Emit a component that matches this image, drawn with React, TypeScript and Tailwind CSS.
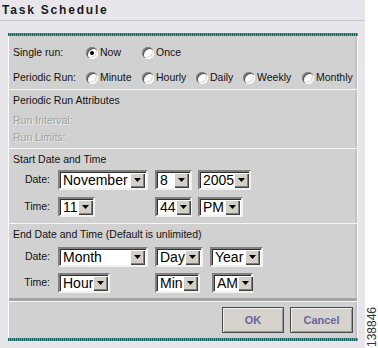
import type { ReactNode } from 'react';

const teal =
  'h-[3px] bg-[repeating-linear-gradient(90deg,#14615c_0px,#14615c_1px,#5ea7a1_1px,#5ea7a1_2px)]';

function Radio({ checked }: { checked?: boolean }) {
  return (
    <span className="inline-flex h-[12px] w-[12px] shrink-0 items-center justify-center rounded-full bg-white shadow-[inset_1px_1px_0_#8a8a8a,inset_2px_2px_0_#5a5a5a,inset_-1px_-1px_0_#ffffff,inset_-2px_-2px_0_#dcdcdc]">
      {checked && <span className="h-[4px] w-[4px] rounded-full bg-black" />}
    </span>
  );
}

function Option({ label, checked, className }: { label: string; checked?: boolean; className?: string }) {
  return (
    <div className={`flex items-center gap-[1px] ${className ?? ''}`}>
      <Radio checked={checked} />
      <span className="pl-[1px]">{label}</span>
    </div>
  );
}

function DropButton() {
  return (
    <span className="mr-[1px] flex h-[15px] w-[15px] shrink-0 items-center justify-center bg-[#d4d0c8] shadow-[inset_1px_1px_0_#ffffff,inset_-1px_-1px_0_#404040,inset_-2px_-2px_0_#808080]">
      <svg width="7" height="4" viewBox="0 0 7 4">
        <polygon points="0,0 7,0 3.5,4" fill="#000" />
      </svg>
    </span>
  );
}

function Select({ value, className }: { value: string; className: string }) {
  return (
    <div
      className={`flex h-[20px] shrink-0 items-center border-2 border-t-[#808080] border-l-[#808080] border-b-[#f2f2f2] border-r-[#f2f2f2] bg-white shadow-[inset_1px_1px_0_#303030] ${className}`}
    >
      <span className="flex-1 pl-[3px] text-[14px] leading-none text-black">{value}</span>
      <DropButton />
    </div>
  );
}

function FieldRow({ label, children, className }: { label: string; children: ReactNode; className?: string }) {
  return (
    <div className={`flex items-center ${className ?? ''}`}>
      <span className="w-[41px] text-right">{label}</span>
      <div className="ml-[8px] flex items-center">{children}</div>
    </div>
  );
}

function Sep() {
  return <div className="h-[1px] bg-[#f7f7f7]" />;
}

export default function App() {
  return (
    <div className="flex h-[348px] w-[378px] bg-white font-['Liberation_Sans',Arial,sans-serif] text-[10.5px] text-[#111]">
      <div className="flex w-[365px] flex-col bg-[#e8e6ea]">
        <div className="h-[21px] border-b border-[#c9c6cc] pl-[2px] pt-[3px] text-[12px] font-bold leading-[14px] tracking-[1.8px] text-[#1a1a1a]">
          Task Schedule
        </div>

        <div className="ml-[8px] mt-[12px] w-[350px]">
          <div className={teal} />
          <div className="border-l border-r border-l-white border-r-[#f4f4f4] bg-[#d1d1d1] shadow-[inset_-2px_0_0_#c4c4c4]">
            {/* run type */}
            <div className="pl-[4px] pt-[6px]">
              <div className="flex h-[22px] items-center">
                <span className="w-[73px]">Single run:</span>
                <Option label="Now" checked className="w-[56px]" />
                <Option label="Once" />
              </div>
              <div className="mt-[3px] flex h-[22px] items-center">
                <span className="w-[73px]">Periodic Run:</span>
                <Option label="Minute" className="w-[56px]" />
                <Option label="Hourly" className="w-[54px]" />
                <Option label="Daily" className="w-[47px]" />
                <Option label="Weekly" className="w-[59px]" />
                <Option label="Monthly" />
              </div>
            </div>
            <Sep />

            {/* periodic attributes */}
            <div className="pl-[4px] pt-[3px] pb-[2px]">
              <div className="flex h-[16px] items-center">Periodic Run Attributes</div>
              <div className="mt-[4px] flex h-[16px] items-center text-[#a2a2a2] [text-shadow:1px_1px_0_#ececec]">
                Run Interval:
              </div>
              <div className="mt-[1px] flex h-[16px] items-center text-[#a2a2a2] [text-shadow:1px_1px_0_#ececec]">
                Run Limits:
              </div>
            </div>
            <Sep />

            {/* start */}
            <div className="pt-[3px] pb-[6px]">
              <div className="flex h-[16px] items-center pl-[4px]">Start Date and Time</div>
              <FieldRow label="Date:" className="mt-[2px]">
                <Select value="November" className="w-[90px]" />
                <Select value="8" className="ml-[7px] w-[37px]" />
                <Select value="2005" className="ml-[6px] w-[53px]" />
              </FieldRow>
              <FieldRow label="Time:" className="mt-[7px]">
                <div className="w-[97px]">
                  <Select value="11" className="w-[37px]" />
                </div>
                <Select value="44" className="w-[37px]" />
                <Select value="PM" className="ml-[6px] w-[45px]" />
              </FieldRow>
            </div>
            <Sep />

            {/* end */}
            <div className="pt-[3px] pb-[5px]">
              <div className="flex h-[16px] items-center pl-[4px]">End Date and Time (Default is unlimited)</div>
              <FieldRow label="Date:" className="mt-[4px]">
                <Select value="Month" className="w-[90px]" />
                <Select value="Day" className="ml-[7px] w-[48px]" />
                <Select value="Year" className="ml-[7px] w-[53px]" />
              </FieldRow>
              <FieldRow label="Time:" className="mt-[6px]">
                <div className="w-[97px]">
                  <Select value="Hour" className="w-[52px]" />
                </div>
                <Select value="Min" className="w-[45px]" />
                <Select value="AM" className="ml-[12px] w-[41px]" />
              </FieldRow>
            </div>
            <div className="h-[3px] bg-[#a4a4a4]" />
            <Sep />

            {/* buttons */}
            <div className="flex h-[36px] items-center justify-end gap-[6px] pr-[4px]">
              <button className="h-[26px] w-[62px] border border-[#4a4a4a] bg-[#d6d3ce] text-[11px] font-bold text-[#666699] shadow-[inset_1px_1px_0_#f0f0f0,inset_-1px_-1px_0_#9a9a9a]">
                OK
              </button>
              <button className="h-[26px] w-[63px] border border-[#4a4a4a] bg-[#d6d3ce] text-[11px] font-bold text-[#666699] shadow-[inset_1px_1px_0_#f0f0f0,inset_-1px_-1px_0_#9a9a9a]">
                Cancel
              </button>
            </div>
          </div>
          <div className={teal} />
        </div>
      </div>

      <div className="flex flex-1 flex-col items-center justify-end pb-[1px]">
        <span className="rotate-180 text-[12px] leading-none text-[#333] [writing-mode:vertical-rl]">138846</span>
      </div>
    </div>
  );
}
